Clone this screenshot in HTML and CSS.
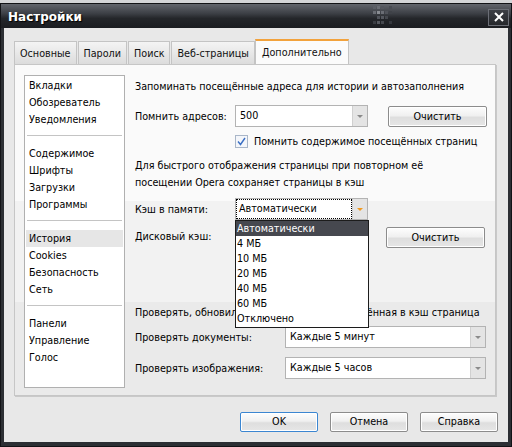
FILE: index.html
```html
<!DOCTYPE html>
<html lang="ru">
<head>
    <meta charset="UTF-8">
    <title>Настройки</title>
    <link rel="stylesheet" href="styles.css">
</head>
<body>

    <div class="window">
        <div class="titlebar">
            <span class="title">Настройки</span>
            <svg class="grip" width="26" height="22" viewBox="0 0 26 22">
                <rect x="0" y="1" width="3" height="3" fill="#5c5f66"/>
                <rect x="4" y="1" width="3" height="3" fill="#6a6d74"/>
                <rect x="8" y="1" width="3" height="3" fill="#54575e"/>
                <rect x="16" y="1" width="3" height="3" fill="#4a4d54"/>
                <rect x="0" y="6" width="3" height="3" fill="#6a6d74"/>
                <rect x="4" y="6" width="3" height="3" fill="#8a8d93"/>
                <rect x="8" y="6" width="3" height="3" fill="#6a6d74"/>
                <rect x="12" y="6" width="3" height="3" fill="#50535a"/>
                <rect x="16" y="6" width="3" height="3" fill="#3f4248"/>
                <rect x="4" y="11" width="3" height="3" fill="#50535a"/>
                <rect x="8" y="11" width="3" height="3" fill="#54575e"/>
                <rect x="12" y="11" width="3" height="3" fill="#44474d"/>
                <rect x="0" y="16" width="3" height="3" fill="#3a3d43"/>
                <rect x="4" y="16" width="3" height="3" fill="#55585f"/>
                <rect x="8" y="16" width="3" height="3" fill="#45484e"/>
                <rect x="16" y="16" width="3" height="3" fill="#35383e"/>
            </svg>
            <span class="close-btn">
                <svg width="12" height="10" viewBox="0 0 12 10">
                    <path d="M2 1 L10 9 M10 1 L2 9" stroke="#fff" stroke-width="2"/>
                </svg>
            </span>
        </div>

        <div class="client">
            <div class="tabs">
                <span class="tab">Основные</span>
                <span class="tab">Пароли</span>
                <span class="tab">Поиск</span>
                <span class="tab">Веб-страницы</span>
                <span class="tab active">Дополнительно</span>
            </div>

            <div class="panel">
                <ul class="side-list">
                    <li>Вкладки</li>
                    <li>Обозреватель</li>
                    <li>Уведомления</li>
                    <li class="sep"></li>
                    <li>Содержимое</li>
                    <li>Шрифты</li>
                    <li>Загрузки</li>
                    <li>Программы</li>
                    <li class="sep"></li>
                    <li class="selected">История</li>
                    <li>Cookies</li>
                    <li>Безопасность</li>
                    <li>Сеть</li>
                    <li class="sep"></li>
                    <li>Панели</li>
                    <li>Управление</li>
                    <li>Голос</li>
                </ul>

                <div class="settings">
                    <div class="heading">Запоминать посещённые адреса для истории и автозаполнения</div>

                    <div class="row row-history">
                        <span class="label">Помнить адресов:</span>
                        <span class="combo"><span class="combo-text">500</span><span class="combo-arrow"></span></span>
                        <span class="btn">Очистить</span>
                    </div>

                    <div class="check-row">
                        <svg class="checkbox" width="13" height="13" viewBox="0 0 13 13">
                            <rect x="0.5" y="0.5" width="12" height="12" fill="#f4f6fa" stroke="#a9b6c8"/>
                            <path d="M3 6.5 L5.5 9.5 L10 3" fill="none" stroke="#3a6fc4" stroke-width="1.4"/>
                        </svg>
                        <span>Помнить содержимое посещённых страниц</span>
                    </div>

                    <p class="note">Для быстрого отображения страницы при повторном её посещении Opera сохраняет страницы в кэш</p>

                    <div class="row row-cache">
                        <span class="label">Кэш в памяти:</span>
                        <span class="combo focused">
                            <span class="combo-text">Автоматически</span><span class="combo-arrow"></span>
                            <ul class="dropdown">
                                <li class="current">Автоматически</li>
                                <li>4 МБ</li>
                                <li>10 МБ</li>
                                <li>20 МБ</li>
                                <li>40 МБ</li>
                                <li>60 МБ</li>
                                <li>Отключено</li>
                            </ul>
                        </span>
                    </div>

                    <div class="row row-disk">
                        <span class="label">Дисковый кэш:</span>
                        <span class="combo-gap"></span>
                        <span class="btn">Очистить</span>
                    </div>

                    <div class="heading check-heading">Проверять, обновилась ли на сервере сохранённая в кэш страница</div>

                    <div class="row row-wide">
                        <span class="label">Проверять документы:</span>
                        <span class="combo wide"><span class="combo-text">Каждые 5 минут</span><span class="combo-arrow"></span></span>
                    </div>

                    <div class="row row-wide row-images">
                        <span class="label">Проверять изображения:</span>
                        <span class="combo wide"><span class="combo-text">Каждые 5 часов</span><span class="combo-arrow"></span></span>
                    </div>
                </div>
            </div>

            <div class="footer">
                <span class="btn dlg default">OK</span>
                <span class="btn dlg">Отмена</span>
                <span class="btn dlg">Справка</span>
            </div>
        </div>
    </div>

</body>
</html>
```

FILE: styles.css
```css
html {
    background: #d4d5d7;
}
body {
    margin: 0;
    padding-top: 3px;
    font-family: 'DejaVu Sans Condensed', 'DejaVu Sans', sans-serif;
    font-size: 10.7px;
    color: #000;
}
.window {
    width: 510px;
    height: 442px;
    border: 1px solid #121316;
    background: #2c2f34;
    display: flex;
    flex-direction: column;
}
/* Title bar */
.titlebar {
    height: 24px;
    flex: none;
    display: flex;
    align-items: center;
    position: relative;
    background: linear-gradient(#62656c 0, #3c3f45 40%, #24262a 60%, #1b1d21 100%);
}
.title {
    margin-left: 7px;
    margin-top: 2px;
    color: #fff;
    font-family: 'DejaVu Sans', sans-serif;
    font-weight: bold;
    font-size: 12px;
    text-shadow: 1px 1px 1px #000;
}
.grip {
    position: absolute;
    left: 372px;
    top: 1px;
}
.close-btn {
    margin-left: auto;
    margin-right: 2px;
    margin-top: 2px;
    width: 19px;
    height: 15px;
    border: 1px solid #6b6e76;
    background: linear-gradient(#3c3f45, #25272b);
    display: flex;
    align-items: center;
    justify-content: center;
}
/* Client area */
.client {
    flex: 1;
    margin: 0 3px 4px 3px;
    background: #e8e8e8;
    display: flex;
    flex-direction: column;
}
.tabs {
    display: flex;
    align-items: flex-end;
    margin: 12px 0 0 10px;
    height: 24px;
}
.tab {
    height: 22px;
    line-height: 23px;
    padding: 0 5px;
    margin-right: 1px;
    border: 1px solid #c4c4c4;
    border-bottom: none;
    background: linear-gradient(#f4f4f4, #dcdcdc);
    color: #111;
}
.tab.active {
    height: 23px;
    line-height: 24px;
    margin-right: 0;
    margin-left: -1px;
    padding: 0 6px;
    border-color: #c4c4c4;
    border-top: 2px solid #f2a23c;
    background: #fbfbfb;
    position: relative;
    z-index: 1;
}
.panel {
    margin-left: 10px;
    width: 471px;
    border: 1px solid #c6c6c6;
    box-shadow: 1px 1px 0 #c9c9c9;
    background: linear-gradient(#fafafa 0, #fafafa 136px, #f2f2f2 136px, #f2f2f2 237px, #eaeaea 237px);
    display: flex;
    padding: 10px 0 0 9px;
    height: 320px;
}
/* Left category list */
.side-list {
    list-style: none;
    margin: 0;
    padding: 1px 1px 0 1px;
    width: 97px;
    height: 310px;
    border: 1px solid #b0b0b0;
    background: #fff;
    flex: none;
}
.side-list li {
    height: 17px;
    line-height: 17px;
    padding-left: 3px;
}
.side-list li.sep {
    height: 1px;
    margin: 7px 1px 9px 1px;
    background: #c4c4c4;
}
.side-list li.selected {
    background: #e6e6e6;
}
/* Right settings column */
.settings {
    margin-left: 10px;
    padding-top: 3px;
    flex: 1;
}
.heading {
    height: 18px;
    line-height: 18px;
    white-space: nowrap;
}
.row {
    display: flex;
    align-items: center;
    height: 22px;
}
.label {
    width: 100px;
    flex: none;
}
.row-history {
    margin-top: 9px;
}
.row-cache {
    margin-top: 7px;
    height: 22px;
}
.row-disk {
    margin-top: 7px;
    height: 21px;
    align-items: flex-start;
}
.row-disk .label {
    line-height: 20px;
}
.row-wide .label {
    width: 150px;
}
.row-wide {
    margin-top: 4px;
}
.row-images {
    margin-top: 9px;
}
.check-heading {
    margin-top: 56px;
}
.combo {
    position: relative;
    display: flex;
    width: 131px;
    height: 20px;
    border: 1px solid #b3b3b3;
    background: #fff;
    flex: none;
}
.combo.wide {
    width: 199px;
}
.combo-text {
    flex: 1;
    padding-left: 4px;
    line-height: 20px;
    color: #000;
}
.combo-arrow {
    width: 14px;
    background: #e4e4e4;
    border-left: 1px solid #d0d0d0;
    position: relative;
}
.combo-arrow::after {
    content: '';
    position: absolute;
    left: 4px;
    top: 9px;
    border-left: 3px solid transparent;
    border-right: 3px solid transparent;
    border-top: 3px solid #8a8a8a;
}
.combo.focused .combo-text {
    margin: 1px;
    padding-left: 2px;
    line-height: 18px;
    outline: 1px dotted #000;
}
.combo.focused .combo-arrow::after {
    border-top-color: #f29a1f;
}
.combo-gap {
    width: 131px;
    flex: none;
}
.dropdown {
    position: absolute;
    left: -1px;
    top: 21px;
    width: 132px;
    margin: 0;
    padding: 0 0 1px 0;
    list-style: none;
    border: 1px solid #1c1c1c;
    background: #fff;
    z-index: 5;
}
.dropdown li {
    height: 15px;
    line-height: 15px;
    padding-left: 1px;
}
.dropdown li.current {
    background: #46484f;
    color: #fff;
}
.check-row {
    display: flex;
    align-items: center;
    height: 16px;
    margin: 6px 0 0 100px;
}
.checkbox {
    margin-right: 6px;
}
.note {
    margin: 8px 0 0 0;
    line-height: 17px;
    width: 320px;
}
/* Buttons */
.btn {
    display: inline-block;
    box-sizing: border-box;
    width: 99px;
    height: 21px;
    line-height: 19px;
    text-align: center;
    border: 1px solid #8c8c8c;
    border-radius: 2px;
    background: linear-gradient(#fdfdfd 0, #f0f0f0 45%, #dedede 55%, #e6e6e6 100%);
    box-shadow: inset 0 0 0 1px #fff;
    color: #000;
}
.row .btn {
    margin-left: 20px;
}
.footer {
    display: flex;
    justify-content: flex-end;
    gap: 12px;
    margin: 16px 10px 0 0;
}
.btn.dlg {
    width: 78px;
    height: 20px;
    line-height: 18px;
}
.btn.default {
    border-color: #3b86d1;
}
```
